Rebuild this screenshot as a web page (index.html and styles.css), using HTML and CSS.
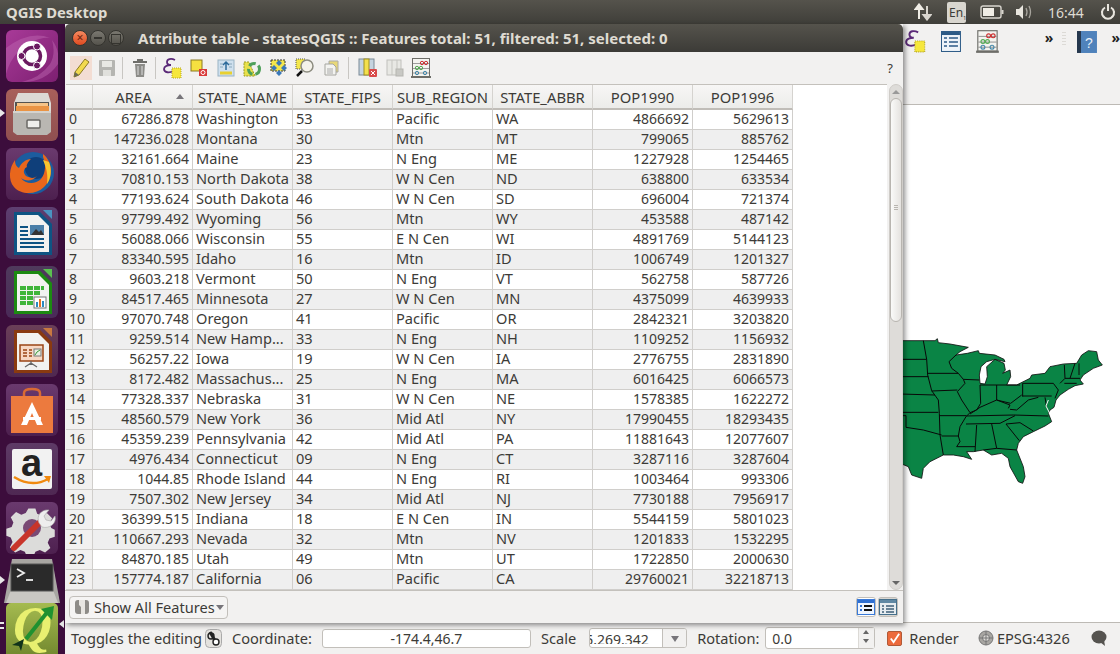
FILE: index.html
```html
<!DOCTYPE html>
<html lang="en">
<head>
    <meta charset="UTF-8">
    <title>QGIS Desktop</title>
    <link rel="stylesheet" href="styles.css">
</head>
<body>

<svg class="defs" width="0" height="0">
    <symbol id="epsilon" viewBox="0 0 20 22">
        <path d="M12 3C8 1 4 2 4 5c0 2 2 3 4 3C5 8 1 9 1 12c0 4 6 4 9 2" fill="none" stroke="#5b2a78" stroke-width="1.800"/>
        <rect x="9" y="11" width="9" height="10" fill="#f6e73c" stroke="#b8a820" stroke-dasharray="1 1"/>
    </symbol>
    <symbol id="abacus" viewBox="0 0 20 22">
        <rect x="1.500" y="1.500" width="17" height="18" fill="#f4f4f0" stroke="#6d6d68"/>
        <path d="M2 6.500h16M2 11.500h16M2 16h16" stroke="#888" stroke-width=".8"/>
        <circle cx="11" cy="6" r="1.700" fill="none" stroke="#c33"/><circle cx="15" cy="6" r="1.700" fill="none" stroke="#c33"/>
        <circle cx="6" cy="11" r="1.700" fill="none" stroke="#5a5"/><circle cx="10" cy="11" r="1.700" fill="none" stroke="#5a5"/>
        <circle cx="6" cy="16" r="1.700" fill="none" stroke="#48a"/><circle cx="14" cy="16" r="1.700" fill="none" stroke="#48a"/>
        <rect x="0" y="19" width="20" height="2" fill="#6d6d68"/>
    </symbol>
</svg>

<header class="topbar">
    <span class="app-title">QGIS Desktop</span>
    <div class="indicators">
        <svg class="ind-net" width="18" height="18" viewBox="0 0 18 18"><path d="M5 16V5M1.500 6 5 1.500 8.500 6z" stroke="#f0ede6" stroke-width="2" fill="#f0ede6"/><path d="M13 3v11M9.500 12l3.500 4.500 3.500-4.500z" stroke="#d8d5ce" stroke-width="2" fill="#d8d5ce"/></svg>
        <span class="ind-lang">En<sub>1</sub></span>
        <svg class="ind-batt" width="24" height="14" viewBox="0 0 24 14"><rect x="1" y="1" width="20" height="12" rx="2" fill="none" stroke="#d8d5ce" stroke-width="1.400"/><rect x="3" y="3" width="11" height="8" fill="#f0ede6"/><rect x="21.500" y="5" width="2" height="4" fill="#d8d5ce"/></svg>
        <svg class="ind-vol" width="18" height="16" viewBox="0 0 18 16"><path d="M1 5h3l4-4v14l-4-4H1z" fill="#e8e5de"/><path d="M11 4q2 4 0 8M14 2q3 6 0 12" fill="none" stroke="#a8a59e" stroke-width="1.300"/></svg>
        <span class="ind-clock">16:44</span>
        <svg class="ind-power" width="16" height="18" viewBox="0 0 16 18"><path d="M5 4.500a6 6 0 1 0 6 0M8 1v7" fill="none" stroke="#e8e5de" stroke-width="2"/><path d="M1 9h2M13 9h2M3 14l1.500-1M13 14l-1.500-1" stroke="#e8e5de" stroke-width="1.500"/></svg>
    </div>
</header>

<div class="desktop">
    <nav class="launcher">
        <div class="tile tile-ubuntu">
            <svg width="52" height="52" viewBox="0 0 52 52"><path d="M0 18Q24 0 44 8 30 6 12 22 4 30 0 44zM52 34Q40 52 16 52 34 48 44 34 50 24 46 10 54 20 52 34z" fill="#c06ab4" opacity=".45"/><circle cx="26" cy="26" r="15" fill="#fff"/><circle cx="26" cy="26" r="8.500" fill="none" stroke="#6a1a60" stroke-width="3.500"/><circle cx="15.500" cy="26" r="3.500" fill="#6a1a60" stroke="#fff"/><circle cx="31" cy="16.500" r="3.500" fill="#6a1a60" stroke="#fff"/><circle cx="31" cy="35.500" r="3.500" fill="#6a1a60" stroke="#fff"/></svg>
        </div>
        <div class="tile tile-files">
            <svg width="52" height="52" viewBox="0 0 52 52"><path d="M8 14 12 4h30l3 10v26H8z" fill="#dcdad5"/><rect x="9" y="13" width="34" height="12" fill="#55534f"/><rect x="11" y="14" width="31" height="3" fill="#f6c488"/><rect x="10" y="17" width="33" height="8" fill="#ea9444"/><path d="M7 22H45V43L41 46H11L7 43z" fill="#b9b7b2"/><path d="M7 22H45V24H7z" fill="#d5d3ce"/><rect x="21" y="31" width="13" height="8" rx="1" fill="#efefec" stroke="#6a6864" stroke-width="1.500"/></svg>
        </div>
        <div class="tile tile-dark">
            <svg width="52" height="52" viewBox="0 0 52 52"><circle cx="27" cy="25" r="21" fill="#1c5c9e"/><circle cx="30" cy="20" r="11" fill="#0f3f7a"/><path d="M37 6c10 8 11 24 1 33-8 8-23 8-30 0C2 32 3 20 9 12c0 5 2 7 4 8 2-5 7-9 12-9-3 3-5 6-4 8-4 2-4 6-1 9 4 2 8 3 11 0-5 6-12 5-16 2 4 6 14 7 20 1 5-6 5-16 2-22z" fill="#e8661c"/><path d="M43 14c3 8 2 16-2 22 1-8 0-15-4-24z" fill="#f8c72e"/></svg>
        </div>
        <div class="tile tile-writer">
            <svg width="52" height="52" viewBox="0 0 52 52"><path d="M8 5h26l12 12v31H8z" fill="#0e5483"/><path d="M11 8h21l11 11v26H11z" fill="#f2f2f0"/><path d="M14 20h8M14 24h8M14 28h8M14 32h24M14 36h24M14 40h24" stroke="#0e5483" stroke-width="2"/><rect x="24" y="18" width="14" height="10" fill="#4a7fa8"/><path d="M25 28l5-6 3 3 2-2 3 5z" fill="#333"/><path d="M37 3l9 0 0 9z" fill="#4a93c0"/></svg>
        </div>
        <div class="tile tile-calc">
            <svg width="52" height="52" viewBox="0 0 52 52"><path d="M8 5h26l12 12v31H8z" fill="#1c8a12"/><path d="M11 8h21l11 11v26H11z" fill="#f2f2f0"/><g fill="#3fb53a"><rect x="14" y="20" width="6" height="4"/><rect x="21" y="20" width="6" height="4"/><rect x="28" y="20" width="6" height="4"/><rect x="35" y="20" width="3" height="4"/><rect x="14" y="25" width="6" height="4"/><rect x="21" y="25" width="6" height="4"/><rect x="28" y="25" width="6" height="4"/><rect x="14" y="30" width="6" height="4"/><rect x="21" y="30" width="6" height="4"/><rect x="14" y="35" width="6" height="4"/><rect x="21" y="35" width="6" height="4"/></g><rect x="28" y="31" width="12" height="11" fill="#fff" stroke="#777"/><rect x="30" y="36" width="2" height="5" fill="#2a8ac0"/><rect x="33" y="33" width="2" height="8" fill="#e87020"/><rect x="36" y="35" width="2" height="6" fill="#2a8ac0"/><path d="M37 3l9 0 0 9z" fill="#5ac050"/></svg>
        </div>
        <div class="tile tile-impress">
            <svg width="52" height="52" viewBox="0 0 52 52"><path d="M8 5h26l12 12v31H8z" fill="#8a3a10"/><path d="M11 8h21l11 11v26H11z" fill="#f2f2f0"/><rect x="14" y="20" width="23" height="16" fill="#f7d8c4" stroke="#9a4414" stroke-width="1.500"/><path d="M17 25h4M17 28h4M17 31h4M23 25h3M23 28h3M23 31h3" stroke="#9a4414" stroke-width="1.600"/><rect x="28" y="24" width="7" height="7" fill="#e8eee0" stroke="#777"/><path d="M29 30l2-3 3-2" stroke="#3a9a3a" fill="none"/><path d="M25 36v4M25 38l-6 4M25 38l6 4" stroke="#666" stroke-width="1.200"/><path d="M37 3l9 0 0 9z" fill="#c87840"/></svg>
        </div>
        <div class="tile tile-store">
            <svg width="52" height="52" viewBox="0 0 52 52"><path d="M18 14v-5q0-4 8-4t8 4v5" fill="none" stroke="#d96a34" stroke-width="2.500"/><path d="M5 12h42v37H5z" fill="#ec7a3e"/><path d="M15 41 26 18l11 23h-6l-5-12-5 12z" fill="#fff"/><rect x="17" y="33" width="18" height="3" fill="#fff"/></svg>
        </div>
        <div class="tile tile-amazon">
            <span class="amazon-a">a</span>
            <svg class="amazon-smile" width="40" height="12" viewBox="0 0 40 12"><path d="M1 2q18 11 34 2" fill="none" stroke="#f08a10" stroke-width="2.500"/><path d="M31 1l7 0-2 7z" fill="#f08a10"/></svg>
        </div>
        <div class="tile tile-tools">
            <svg width="52" height="52" viewBox="0 0 52 52"><path d="M22 4h8l2 6 5 2 6-3 6 6-3 6 2 5 4 2v8l-6 2-2 5 3 6-6 5-6-3-5 2-2 5h-8l-2-5-5-2-6 3-6-6 3-6-2-5-5-2v-8l6-2 2-5-3-6 6-6 6 3 5-2z" fill="#dcdcda" transform="translate(3 3) scale(.88)"/><circle cx="26" cy="26" r="9" fill="#7a4a74"/><path d="M8 46 34 20" stroke="#c8352a" stroke-width="6" stroke-linecap="round"/><path d="M33 21c-3-7 2-14 10-13l-5 6 2 4 5 1 4-5c2 8-6 13-13 11z" fill="#eee" stroke="#aaa" stroke-width=".6"/></svg>
        </div>
        <div class="tile-term">
            <svg width="56" height="46" viewBox="0 0 56 46"><path d="M8 1h40l8 44H0z" fill="#a8a6a2"/><path d="M7 32h42l5 13H2z" fill="#c9c7c3"/><rect x="7" y="6" width="42" height="27" fill="#2a2a2a" stroke="#555"/><path d="M13 11l7 4-7 4" fill="none" stroke="#eee" stroke-width="1.800"/><path d="M22 22h7" stroke="#eee" stroke-width="1.800"/></svg>
        </div>
        <div class="tile-qgis">
            <span class="q-letter">Q</span>
            <svg class="q-arrow" width="52" height="51" viewBox="0 0 52 51"><path d="M20 36 43 7" stroke="#1f9130" stroke-width="4"/><path d="M35 6l13-3-2 14z" fill="#1f9130"/><path d="M6 42l12-6-3 12-2-5z" fill="#10331a"/></svg>
        </div>
        <i class="pip pip-files"></i>
        <i class="pip pip-term"></i>
        <i class="pip pip-q1"></i>
        <i class="pip pip-q2"></i>
        <i class="pip-right"></i>
    </nav>

    <main class="qgis">
        <div class="main-tools">
            <svg width="22" height="24"><use href="#epsilon"/></svg>
            <svg class="mt-list" width="22" height="24" viewBox="0 0 22 24"><rect x="1.500" y="2.500" width="19" height="20" fill="#eef3f8" stroke="#2c5a86"/><rect x="2" y="3" width="18" height="3" fill="#2c5a86"/><path d="M4 9h3M9 9h9M4 13h3M9 13h9M4 17h3M9 17h9" stroke="#2c5a86" stroke-width="1.400"/></svg>
            <svg class="mt-abacus" width="23" height="25"><use href="#abacus"/></svg>
            <span class="chev chev-a">»</span>
            <span class="grip"></span>
            <svg class="mt-help" width="21" height="24" viewBox="0 0 21 24"><rect x="0" y="1" width="4" height="22" fill="#26384e"/><rect x="4" y="1" width="16" height="22" fill="#4f82bb"/><text x="12" y="18" font-size="14" font-family="Liberation Sans" fill="#e8f0f8" text-anchor="middle">?</text></svg>
            <span class="chev chev-b">»</span>
        </div>
        <div class="canvas">
            <svg class="usmap" width="240" height="180" viewBox="0 0 720 540">
                <path fill="#0a8445" stroke="#111" stroke-width="2.500" stroke-linejoin="round" d="M60 62 165 62 172 56 175 68 210 72 265 82 240 95 228 105 262 100 295 92 298 100 345 105 372 118 375 125 345 118 320 125 303 140 298 165 300 190 315 192 322 170 320 140 345 118 372 130 376 150 368 160 390 150 392 170 380 195 410 195 450 175 455 165 495 160 510 140 550 132 590 130 605 105 625 92 650 95 655 120 667 135 640 145 610 165 600 180 610 192 585 197 565 208 540 225 528 240 522 262 510 270 505 280 515 305 495 318 460 335 430 350 415 370 410 390 430 440 435 470 428 490 415 485 390 440 385 415 365 400 335 405 310 390 280 395 260 395 275 418 250 410 220 405 190 405 150 425 130 445 125 475 95 465 85 440 60 430z"/>
                <path fill="none" stroke="#080808" stroke-width="3" d="M60 118H140M60 170H145M60 222 165 225M60 277H175M60 287H78V322L130 330 185 345M130 62 140 118 143 165 155 212 175 240 178 280 180 345 190 405M185 348H235M178 287H258M143 160H235M155 213 232 210M207 125 215 145 235 160 250 178 255 190 232 215 245 240 270 278 258 290 240 320 235 348 240 365 230 380 285 380M250 178 298 180M300 195 302 250 290 270 270 278M300 195H420M350 195V240M428 190V230M428 190H520M428 228H515M270 282 300 262 350 240 390 255 385 265M350 240 392 250 425 225M258 288 400 285M258 312 360 310 405 287M400 285 505 288M390 268 410 270 445 240 475 232M290 315 285 395M335 312 350 385M378 312 418 362M378 312 420 308 460 333M310 390 350 385 410 390M553 135 555 175 540 190M585 130 570 175M597 130 597 165M555 175H600M553 190H590M520 190 535 210 525 235M495 232 500 262M207 125 228 105"/>
                <path fill="none" stroke="#fff" stroke-width="3" d="M505 240 498 258 510 282"/>
            </svg>
        </div>
        <footer class="statusbar">
            <span class="st-msg">Toggles the editing</span>
            <svg class="st-mouse" width="17" height="19" viewBox="0 0 17 19"><rect x=".5" y=".5" width="16" height="18" rx="4" fill="#e4e2de" stroke="#aaa"/><path d="M5 3l7 12" stroke="#222" stroke-width="3"/><circle cx="6" cy="7" r="3" fill="none" stroke="#222" stroke-width="1.400"/><circle cx="11" cy="13" r="3" fill="#fff" stroke="#222" stroke-width="1.400"/></svg>
            <span class="st-coord">Coordinate:</span>
            <span class="st-input">-174.4,46.7</span>
            <span class="st-scale">Scale</span>
            <span class="st-combo"><span class="combo-val"><span class="combo-text">5.269.342</span></span><span class="combo-btn"></span></span>
            <span class="st-rot">Rotation:</span>
            <span class="st-spin"><span>0.0</span><span class="spin-btn"></span></span>
            <span class="st-check"><svg width="13" height="13" viewBox="0 0 14 14"><path d="M3 7l3 4 6-9" fill="none" stroke="#fff" stroke-width="2"/></svg></span>
            <span class="st-render">Render</span>
            <svg class="st-globe" width="16" height="16" viewBox="0 0 16 16"><circle cx="8" cy="8" r="7" fill="#a8a6a2" stroke="#777"/><circle cx="8" cy="8" r="3.500" fill="#dcdad6" stroke="#777"/><path d="M1 8h14M8 1v14" stroke="#777"/></svg>
            <span class="st-epsg">EPSG:4326</span>
            <svg class="st-bubble" width="16" height="16" viewBox="0 0 16 16"><ellipse cx="8" cy="7" rx="7.500" ry="6.500" fill="#55534f"/><path d="M9 12l5 4-1-6z" fill="#55534f"/></svg>
        </footer>
    </main>

    <section class="attr-window">
        <div class="win-title">
            <span class="wbtn wbtn-close">×</span>
            <span class="wbtn wbtn-min"></span>
            <span class="wbtn wbtn-max"></span>
            <span class="win-text">Attribute table - statesQGIS :: Features total: 51, filtered: 51, selected: 0</span>
        </div>
        <div class="win-tools">
            <span class="tool tool-on"><svg width="20" height="22" viewBox="0 0 20 22"><path d="M14 2l4 3L8 18l-5 2 1-5z" fill="#f2d94e" stroke="#8a7a20"/><path d="M3 20l1-5 4 3z" fill="#6b6b55"/></svg></span>
            <span class="tool"><svg width="20" height="20" viewBox="0 0 20 20"><rect x="2" y="2" width="16" height="16" rx="1" fill="#b5b5b1"/><rect x="5" y="3" width="10" height="6" fill="#e8e8e4"/><rect x="6" y="12" width="8" height="6" fill="#e0e0dc"/></svg></span>
            <span class="sep"></span>
            <span class="tool"><svg width="16" height="20" viewBox="0 0 16 20"><path d="M1 4h14" stroke="#6e6e6a" stroke-width="2"/><rect x="5" y="1" width="6" height="2" fill="#6e6e6a"/><path d="M3 6h10l-1 13H4z" fill="#8c8c88"/><path d="M6 8v9M10 8v9" stroke="#ddd"/></svg></span>
            <span class="sep sep-b"></span>
            <span class="tool"><svg width="20" height="22"><use href="#epsilon"/></svg></span>
            <span class="tool"><svg width="18" height="18" viewBox="0 0 18 18"><rect x="1" y="1" width="11" height="11" fill="#f6e040" stroke="#8a7a20"/><rect x="9" y="10" width="8" height="7" fill="#d93a3a"/><circle cx="13" cy="13.500" r="2" fill="none" stroke="#fff"/></svg></span>
            <span class="tool"><svg width="18" height="18" viewBox="0 0 18 18"><rect x="1" y="1" width="16" height="16" fill="#cfe0ee" stroke="#9ab4c4"/><path d="M3 14h12" stroke="#e8d030" stroke-width="3"/><path d="M9 11V4M6 6l3-3 3 3" stroke="#2c6a9a" fill="none" stroke-width="1.500"/><path d="M3 5h3M3 8h3M12 5h3M12 8h3" stroke="#8aa8bc"/></svg></span>
            <span class="tool"><svg width="18" height="18" viewBox="0 0 18 18"><path d="M1 3h5l6 14H1z" fill="#e8e04c" stroke="#9a9a20" stroke-dasharray="2 1"/><circle cx="11" cy="10" r="5.500" fill="none" stroke="#4fa05a" stroke-width="3" stroke-dasharray="7 3"/></svg></span>
            <span class="tool"><svg width="18" height="18" viewBox="0 0 18 18"><rect x="1" y="1" width="14" height="11" fill="#f3e64c" stroke="#333" stroke-dasharray="2 1"/><path d="M9 1l3 3-3 3-3-3zM4 6l3 3-3 3-3-3zM14 6l3 3-3 3-3-3zM9 11l3 3-3 3-3-3z" fill="#3a78b8"/></svg></span>
            <span class="tool"><svg width="20" height="20" viewBox="0 0 20 20"><rect x="1" y="1" width="9" height="10" fill="#f3e64c" stroke="#555" stroke-dasharray="1 1"/><circle cx="12" cy="8" r="6" fill="#f4f2ea" stroke="#8c8c80" stroke-width="1.500"/><path d="M7 13l-5 5" stroke="#111" stroke-width="2.500"/></svg></span>
            <span class="tool"><svg width="15" height="16" viewBox="0 0 15 16"><path d="M5 1h9v11H5z" fill="#e8d878" stroke="#aaa"/><path d="M1 4h8l3 3v8H1z" fill="#f3f3f0" stroke="#a5a5a0"/><path d="M3 9h6M3 11h6M3 13h6" stroke="#aaa"/></svg></span>
            <span class="sep sep-c"></span>
            <span class="tool"><svg width="20" height="20" viewBox="0 0 20 20"><rect x="1" y="1" width="15" height="16" fill="#c5d4e0" stroke="#7a8a96"/><rect x="6" y="1" width="5" height="16" fill="#f3e04c" stroke="#a09020"/><rect x="11" y="11" width="8" height="8" rx="1" fill="#d94a4a"/><path d="M13 13l4 4M17 13l-4 4" stroke="#fff"/></svg></span>
            <span class="tool"><svg width="18" height="18" viewBox="0 0 18 18"><rect x="1" y="1" width="14" height="15" fill="#e8e8e4" stroke="#c0c0bc"/><path d="M6 1v15M11 1v15" stroke="#c5c5c0"/><rect x="10" y="10" width="7" height="7" fill="#c8c8c4" stroke="#b5b5b0"/></svg></span>
            <span class="tool"><svg width="20" height="22"><use href="#abacus"/></svg></span>
            <span class="win-help">?</span>
        </div>
        <div class="table-row">
            <div class="table-view">
                <table class="attr">
                    <thead>
                        <tr><th class="corner"></th><th class="th-sort">AREA<i class="sort"></i></th><th>STATE_NAME</th><th>STATE_FIPS</th><th>SUB_REGION</th><th>STATE_ABBR</th><th>POP1990</th><th>POP1996</th></tr>
                    </thead>
                    <tbody>
                        <tr><th>0</th><td class="num">67286.878</td><td>Washington</td><td>53</td><td>Pacific</td><td>WA</td><td class="num">4866692</td><td class="num">5629613</td></tr>
                        <tr><th>1</th><td class="num">147236.028</td><td>Montana</td><td>30</td><td>Mtn</td><td>MT</td><td class="num">799065</td><td class="num">885762</td></tr>
                        <tr><th>2</th><td class="num">32161.664</td><td>Maine</td><td>23</td><td>N Eng</td><td>ME</td><td class="num">1227928</td><td class="num">1254465</td></tr>
                        <tr><th>3</th><td class="num">70810.153</td><td>North Dakota</td><td>38</td><td>W N Cen</td><td>ND</td><td class="num">638800</td><td class="num">633534</td></tr>
                        <tr><th>4</th><td class="num">77193.624</td><td>South Dakota</td><td>46</td><td>W N Cen</td><td>SD</td><td class="num">696004</td><td class="num">721374</td></tr>
                        <tr><th>5</th><td class="num">97799.492</td><td>Wyoming</td><td>56</td><td>Mtn</td><td>WY</td><td class="num">453588</td><td class="num">487142</td></tr>
                        <tr><th>6</th><td class="num">56088.066</td><td>Wisconsin</td><td>55</td><td>E N Cen</td><td>WI</td><td class="num">4891769</td><td class="num">5144123</td></tr>
                        <tr><th>7</th><td class="num">83340.595</td><td>Idaho</td><td>16</td><td>Mtn</td><td>ID</td><td class="num">1006749</td><td class="num">1201327</td></tr>
                        <tr><th>8</th><td class="num">9603.218</td><td>Vermont</td><td>50</td><td>N Eng</td><td>VT</td><td class="num">562758</td><td class="num">587726</td></tr>
                        <tr><th>9</th><td class="num">84517.465</td><td>Minnesota</td><td>27</td><td>W N Cen</td><td>MN</td><td class="num">4375099</td><td class="num">4639933</td></tr>
                        <tr><th>10</th><td class="num">97070.748</td><td>Oregon</td><td>41</td><td>Pacific</td><td>OR</td><td class="num">2842321</td><td class="num">3203820</td></tr>
                        <tr><th>11</th><td class="num">9259.514</td><td>New Hamp...</td><td>33</td><td>N Eng</td><td>NH</td><td class="num">1109252</td><td class="num">1156932</td></tr>
                        <tr><th>12</th><td class="num">56257.22</td><td>Iowa</td><td>19</td><td>W N Cen</td><td>IA</td><td class="num">2776755</td><td class="num">2831890</td></tr>
                        <tr><th>13</th><td class="num">8172.482</td><td>Massachus...</td><td>25</td><td>N Eng</td><td>MA</td><td class="num">6016425</td><td class="num">6066573</td></tr>
                        <tr><th>14</th><td class="num">77328.337</td><td>Nebraska</td><td>31</td><td>W N Cen</td><td>NE</td><td class="num">1578385</td><td class="num">1622272</td></tr>
                        <tr><th>15</th><td class="num">48560.579</td><td>New York</td><td>36</td><td>Mid Atl</td><td>NY</td><td class="num">17990455</td><td class="num">18293435</td></tr>
                        <tr><th>16</th><td class="num">45359.239</td><td>Pennsylvania</td><td>42</td><td>Mid Atl</td><td>PA</td><td class="num">11881643</td><td class="num">12077607</td></tr>
                        <tr><th>17</th><td class="num">4976.434</td><td>Connecticut</td><td>09</td><td>N Eng</td><td>CT</td><td class="num">3287116</td><td class="num">3287604</td></tr>
                        <tr><th>18</th><td class="num">1044.85</td><td>Rhode Island</td><td>44</td><td>N Eng</td><td>RI</td><td class="num">1003464</td><td class="num">993306</td></tr>
                        <tr><th>19</th><td class="num">7507.302</td><td>New Jersey</td><td>34</td><td>Mid Atl</td><td>NJ</td><td class="num">7730188</td><td class="num">7956917</td></tr>
                        <tr><th>20</th><td class="num">36399.515</td><td>Indiana</td><td>18</td><td>E N Cen</td><td>IN</td><td class="num">5544159</td><td class="num">5801023</td></tr>
                        <tr><th>21</th><td class="num">110667.293</td><td>Nevada</td><td>32</td><td>Mtn</td><td>NV</td><td class="num">1201833</td><td class="num">1532295</td></tr>
                        <tr><th>22</th><td class="num">84870.185</td><td>Utah</td><td>49</td><td>Mtn</td><td>UT</td><td class="num">1722850</td><td class="num">2000630</td></tr>
                        <tr><th>23</th><td class="num">157774.187</td><td>California</td><td>06</td><td>Pacific</td><td>CA</td><td class="num">29760021</td><td class="num">32218713</td></tr>
                    </tbody>
                </table>
            </div>
            <div class="scrollbar">
                <span class="scroll-up"></span>
                <span class="scroll-thumb"></span>
                <span class="scroll-grip"></span>
                <span class="scroll-down"></span>
            </div>
        </div>
        <div class="win-bottom">
            <span class="filter-btn">
                <svg width="16" height="16" viewBox="0 0 16 16"><rect x="1" y="1" width="14" height="14" rx="3" fill="#8e8c88"/><path d="M5 1h6v14H7V8L5 6z" fill="#e8e6e2"/></svg>
                Show All Features<i class="caret"></i>
            </span>
            <span class="view-btn view-on"><svg width="18" height="16" viewBox="0 0 18 16"><rect x=".5" y=".5" width="17" height="15" fill="#eef5ff" stroke="#3a7ad8"/><rect x="1" y="1" width="16" height="3" fill="#2f6fd0"/><path d="M3 7h2M3 11h2" stroke="#2f6fd0" stroke-width="2"/><path d="M7 7h8M7 11h8" stroke="#111" stroke-width="2"/></svg></span>
            <span class="view-btn view-off"><svg width="18" height="16" viewBox="0 0 18 16"><rect x=".5" y=".5" width="17" height="15" fill="#e6ecf0" stroke="#46708c"/><rect x="1" y="1" width="16" height="3" fill="#5f88a4"/><path d="M3 7h2M3 10h2M3 13h2M7 7h8M7 10h8M7 13h8" stroke="#3f5f78" stroke-width="1.500"/></svg></span>
        </div>
    </section>
</div>

</body>
</html>
```

FILE: styles.css
```css
* {
    box-sizing: border-box;
}

body {
    margin: 0;
    width: 1120px;
    height: 654px;
    overflow: hidden;
    font-family: "Noto Sans", "Open Sans", sans-serif;
    font-size: 14.6px;
    color: #3c3b37;
    background-color: #f2f1f0;
}

.defs {
    display: block;
    height: 0;
}

/* top panel */
.topbar {
    height: 24px;
    display: flex;
    align-items: center;
    justify-content: space-between;
    padding-left: 6px;
    background: linear-gradient(#55534c, #3f3e39);
    color: #dfdbd2;
}

.app-title {
    font-weight: 700;
    font-size: 14.800px;
}

.indicators {
    display: flex;
    align-items: center;
    padding-right: 4px;
}

.ind-lang {
    width: 19px;
    height: 21px;
    margin-left: 15px;
    padding-left: 2px;
    border-radius: 2px;
    background-color: #d9d6cf;
    color: #3c3b37;
    font-size: 12px;
    line-height: 21px;
}

.ind-lang sub {
    font-size: 6px;
}

.ind-batt {
    margin-left: 14px;
}

.ind-vol {
    margin-left: 11px;
}

.ind-clock {
    width: 36px;
    margin-left: 15px;
    color: #dfdbd2;
    font-size: 14px;
}

.ind-power {
    margin-left: 16px;
}

.desktop {
    position: relative;
    display: flex;
    height: 630px;
}

/* launcher */
.launcher {
    position: relative;
    width: 65px;
    flex-shrink: 0;
    display: flex;
    flex-direction: column;
    align-items: center;
    gap: 7px;
    padding: 6px 1px 0 0;
    background-color: #3c0d3c;
}

.tile {
    position: relative;
    width: 52px;
    height: 52px;
    flex-shrink: 0;
    border-radius: 6px;
    background: linear-gradient(#6a3a6e, #4d204f);
    overflow: hidden;
}

.tile svg {
    display: block;
}

.tile-ubuntu {
    background: linear-gradient(135deg, #a83a98, #7d1f71);
}

.tile-files {
    background: linear-gradient(#a8605a, #8f4f50);
}

.tile-writer {
    background: linear-gradient(#5e3f70, #4a2a58);
}

.tile-calc {
    background: linear-gradient(#4f3a5c, #4a2a58);
}

.tile-impress {
    background: linear-gradient(#6a3f58, #4f2850);
}

.tile-amazon {
    background: linear-gradient(#5e3a66, #4f2853);
}

.tile-amazon::before {
    content: "";
    position: absolute;
    left: 6px;
    top: 6px;
    width: 40px;
    height: 40px;
    background-color: #f2f2f2;
    border-radius: 2px;
}

.amazon-a {
    position: absolute;
    left: 15px;
    top: 1px;
    font-family: "Liberation Sans", sans-serif;
    font-size: 38px;
    line-height: 38px;
    font-weight: 700;
    color: #222;
}

.amazon-smile {
    position: absolute;
    left: 7px;
    top: 32px;
}

.tile-term {
    width: 56px;
    height: 46px;
    flex-shrink: 0;
    margin-top: -3px;
}

.tile-term svg {
    display: block;
}

.tile-qgis {
    position: relative;
    width: 52px;
    height: 51px;
    flex-shrink: 0;
    margin-top: -8px;
    border-radius: 5px 5px 0 0;
    background: linear-gradient(#a5bb50, #748a30);
    overflow: hidden;
}

.q-letter {
    position: absolute;
    left: 7px;
    top: -8px;
    font-family: "Liberation Serif", serif;
    font-size: 54px;
    font-weight: 700;
    font-style: italic;
    color: #e8f070;
}

.q-arrow {
    position: absolute;
    left: 0;
    top: 0;
}

.pip {
    position: absolute;
    left: 0;
    width: 0;
    height: 0;
    border: 4px solid transparent;
    border-left: 5px solid #e8e8e8;
}

.pip-files {
    top: 85px;
}

.pip-term {
    top: 552px;
}

.pip-q1,
.pip-q2 {
    left: 0;
    width: 4px;
    height: 2px;
    border: none;
    background-color: #e8e8e8;
}

.pip-q1 {
    top: 598px;
}

.pip-q2 {
    top: 603px;
}

.pip-right {
    position: absolute;
    left: 59px;
    top: 596px;
    border: 4px solid transparent;
    border-right: 5px solid #e8e8e8;
    border-left: none;
}

/* main qgis window */
.qgis {
    flex: 1;
    display: flex;
    flex-direction: column;
    min-width: 0;
}

.main-tools {
    height: 80px;
    display: flex;
    align-items: flex-start;
    padding: 5px 0 0 840px;
    background-color: #f2f1f0;
}

.mt-list {
    margin-left: 13px;
}

.mt-abacus {
    margin-left: 14px;
}

.chev {
    font-size: 14px;
    font-weight: 700;
    color: #222;
    line-height: 18px;
}

.chev-a {
    margin-left: 46px;
}

.grip {
    width: 4px;
    height: 14px;
    margin: 3px 0 0 9px;
    background: repeating-linear-gradient(#dcdad6 0 1px, transparent 1px 3px);
}

.mt-help {
    margin: 1px 0 0 11px;
}

.chev-b {
    margin-left: 13px;
}

.canvas {
    position: relative;
    flex: 1;
    background-color: #fff;
    border-top: 1px solid #bdbab5;
    border-bottom: 1px solid #bdbab5;
}

.usmap {
    position: absolute;
    left: 815px;
    top: 215px;
}

.statusbar {
    height: 31px;
    display: flex;
    align-items: center;
    padding: 0 0 1px 6px;
    background-color: #f2f1f0;
    white-space: nowrap;
}

.st-mouse {
    margin-left: 3px;
}

.st-coord {
    margin-left: 10px;
}

.st-input {
    width: 209px;
    height: 19px;
    margin-left: 10px;
    border: 1px solid #c2bfba;
    border-radius: 3px;
    background-color: #fff;
    font-size: 14px;
    text-align: center;
    line-height: 17px;
}

.st-scale {
    margin-left: 10px;
}

.st-combo {
    display: flex;
    width: 98px;
    height: 20px;
    margin-left: 13px;
    border: 1px solid #c2bfba;
    border-radius: 3px;
    background-color: #fff;
    overflow: hidden;
}

.combo-val {
    display: block;
    width: 72px;
    height: 15px;
    overflow: hidden;
}

.combo-text {
    display: block;
    margin-left: -5px;
    font-size: 14px;
    line-height: 21px;
}

.combo-btn {
    position: relative;
    flex: 1;
    border-left: 1px solid #c2bfba;
    background-color: #f2f1f0;
}

.combo-btn::after {
    content: "";
    position: absolute;
    left: 8px;
    top: 7px;
    border: 4px solid transparent;
    border-top: 6px solid #77757a;
}

.st-rot {
    margin-left: 10px;
}

.st-spin {
    display: flex;
    justify-content: space-between;
    width: 110px;
    height: 22px;
    margin-left: 6px;
    padding-left: 6px;
    border: 1px solid #c2bfba;
    border-radius: 3px;
    background-color: #fff;
    font-size: 14px;
    line-height: 21px;
}

.spin-btn {
    position: relative;
    width: 16px;
    background-color: #f2f1f0;
    border-left: 1px solid #dcdad6;
}

.spin-btn::before,
.spin-btn::after {
    content: "";
    position: absolute;
    left: 4px;
    border: 3px solid transparent;
}

.spin-btn::before {
    top: -1px;
    border-bottom: 4px solid #666;
}

.spin-btn::after {
    top: 11px;
    border-top: 4px solid #666;
}

.st-check {
    width: 15px;
    height: 15px;
    margin-left: 12px;
    border-radius: 2px;
    background-color: #ec6a3c;
    border: 1px solid #b05a38;
}

.st-check svg {
    display: block;
}

.st-render {
    margin-left: 7px;
}

.st-globe {
    margin-left: 19px;
}

.st-epsg {
    margin-left: 3px;
}

.st-bubble {
    margin-left: 21px;
}

/* attribute table window */
.attr-window {
    position: absolute;
    left: 65px;
    top: 0;
    width: 838px;
    height: 599px;
    display: flex;
    flex-direction: column;
    background-color: #f2f1f0;
    box-shadow: 2px 2px 5px rgba(0, 0, 0, .45);
}

.win-title {
    height: 28px;
    display: flex;
    align-items: center;
    padding-left: 7px;
    border-radius: 5px 5px 0 0;
    background: linear-gradient(#55534c, #3c3b37);
    color: #dfdbd2;
}

.wbtn {
    width: 16px;
    height: 16px;
    margin-right: 2px;
    border-radius: 50%;
    background: linear-gradient(#7a7870, #55534c);
    border: 1px solid #35342f;
    font-size: 12px;
    line-height: 13px;
    text-align: center;
}

.wbtn-close {
    background: linear-gradient(#f58a60, #df4a20);
    color: #6a2410;
}

.wbtn-min::after {
    content: "";
    display: block;
    width: 8px;
    height: 2px;
    margin: 6px auto 0;
    background-color: #35342f;
}

.wbtn-max::after {
    content: "";
    display: block;
    width: 8px;
    height: 8px;
    margin: 3px auto 0;
    border: 1px solid #35342f;
}

.win-text {
    margin-left: 12px;
    font-weight: 700;
    font-size: 15px;
}

.win-tools {
    height: 32px;
    display: flex;
    align-items: center;
    padding-left: 2px;
}

.tool {
    width: 26.500px;
    height: 24px;
    flex-shrink: 0;
    display: flex;
    align-items: center;
    justify-content: center;
}

.tool-on {
    width: 22px;
    margin: 0 2px 0 3px;
    background-color: #f3ddd3;
}

.sep {
    width: 1px;
    height: 22px;
    margin: 0 4px 0 1px;
    background-color: #c8c6c2;
}

.sep-b {
    margin: 0 4px 0 1.500px;
}

.sep-c {
    margin: 0 6px 0 3px;
}

.win-help {
    margin-left: auto;
    padding-right: 10px;
    font-size: 13px;
}

.table-row {
    height: 506px;
    display: flex;
}

.table-view {
    width: 821px;
    margin-left: 1px;
    border: 1px solid #c4c1bc;
    border-width: 1px 0 0 0;
    background-color: #fff;
    overflow: hidden;
}

.attr {
    table-layout: fixed;
    width: 727px;
    border-collapse: separate;
    border-spacing: 0;
    white-space: nowrap;
}

.attr thead th {
    position: relative;
    width: 100px;
    height: 25px;
    padding: 0;
    border-right: 1px solid #d5d3cf;
    border-bottom: 2px solid #c0bdb8;
    background: linear-gradient(#f7f6f5, #ececea);
    font-size: 14.800px;
    font-weight: 400;
    text-align: center;
}

.attr thead .corner {
    width: 27px;
}

.attr thead .th-sort {
    padding-right: 18px;
}

.attr tbody th,
.attr td {
    height: 20px;
    padding: 0 3px 2px;
    border-right: 1px solid #d0cecb;
    border-bottom: 1px solid #d0cecb;
    font-weight: 400;
    line-height: 17px;
    text-align: left;
}

.attr tbody th {
    background-color: #f2f1f0;
    font-size: 14px;
}

.attr .num {
    font-size: 14px;
    text-align: right;
}

.attr tbody tr:nth-child(even) td {
    background-color: #efefef;
}

.sort {
    position: absolute;
    right: 8px;
    top: 9px;
    border: 4px solid transparent;
    border-bottom: 5px solid #77757a;
    border-top: none;
}

.scrollbar {
    position: relative;
    width: 14px;
    margin-left: 2px;
    background-color: #dedcd9;
    border: 1px solid #cfccc8;
    border-radius: 7px;
}

.scroll-thumb {
    position: absolute;
    left: 0;
    top: 13px;
    width: 12px;
    height: 224px;
    border: 1px solid #b8b5b0;
    border-radius: 6px;
    background: linear-gradient(90deg, #fafaf9, #e4e2df);
}

.scroll-grip {
    position: absolute;
    left: 4px;
    top: 120px;
    width: 4px;
    height: 6px;
    background: repeating-linear-gradient(#b8b5b0 0 1px, transparent 1px 2px);
}

.scroll-up,
.scroll-down {
    position: absolute;
    left: 2px;
    border: 4px solid transparent;
}

.scroll-up {
    top: 1px;
    border-bottom: 4px solid #999;
}

.scroll-down {
    bottom: 0;
    border-top: 4px solid #666;
}

.win-bottom {
    flex: 1;
    display: flex;
    align-items: center;
    padding: 0 0 0 4px;
    border-top: 1px solid #c4c1bc;
}

.filter-btn {
    display: flex;
    align-items: center;
    gap: 4px;
    width: 159px;
    height: 23px;
    padding-left: 4px;
    border: 1px solid #c2bfba;
    border-radius: 4px;
    background-color: #f5f4f3;
    white-space: nowrap;
}

.caret {
    margin: 5px 0 0 -3px;
    border: 4px solid transparent;
    border-top: 5px solid #77757a;
}

.view-btn {
    width: 20px;
    height: 20px;
    display: flex;
    align-items: center;
    justify-content: center;
    border-radius: 3px;
    border: 1px solid #c2bfba;
}

.view-on {
    margin-left: auto;
    background-color: #fff;
}

.view-off {
    margin: 0 5px 0 2px;
    background-color: #d8d6d2;
}
```
